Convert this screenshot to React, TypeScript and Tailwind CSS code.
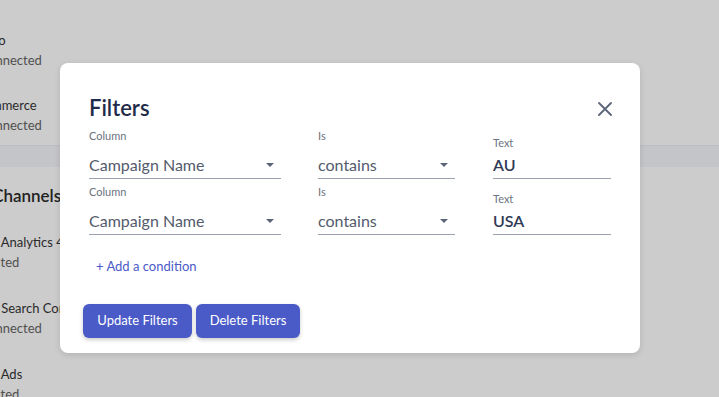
import React from "react";

const items = [
  { name: "Klaviyo", sub: "Not connected", shift: "ml-[7px]" },
  { name: "BigCommerce", sub: "Not connected", shift: "" },
];
const items2 = [
  { name: "Google Analytics 4", sub: "Connected" },
  { name: "Google Search Console", sub: "Not connected" },
  { name: "Google Ads", sub: "Connected" },
];

function Caret() {
  return (
    <svg width="10" height="6" viewBox="0 0 10 6" className="shrink-0">
      <path d="M1 1h8L5 5z" fill="#5b6478" />
    </svg>
  );
}

function SelectField({ label, value, width }: { label: string; value: string; width: string }) {
  return (
    <div className={`flex flex-col ${width}`}>
      <div className="text-[11px] leading-[14px] text-[#6b7280]">{label}</div>
      <div className="mt-[10px] flex items-center justify-between border-b-[1.5px] border-[#9aa0ab] pr-[6px] pb-[1px]">
        <span className="text-[16px] leading-[24px] text-[#535b6c]">{value}</span>
        <Caret />
      </div>
    </div>
  );
}

function TextField({ value }: { value: string }) {
  return (
    <div className="flex w-[118px] flex-col">
      <div className="text-[11px] leading-[14px] text-[#6b7280]">Text</div>
      <div className="mt-[3px] border-b-[1.5px] border-[#9aa0ab] pb-[1px]">
        <span className="text-[16px] font-semibold leading-[24px] text-[#2f3a55]">{value}</span>
      </div>
    </div>
  );
}

function Row({ text }: { text: string }) {
  return (
    <div className="flex items-end">
      <SelectField label="Column" value="Campaign Name" width="w-[192px]" />
      <div className="w-[37px]" />
      <SelectField label="Is" value="contains" width="w-[137px]" />
      <div className="w-[38px]" />
      <TextField value={text} />
    </div>
  );
}

export default function App() {
  return (
    <div className="relative h-[397px] w-[719px] overflow-hidden bg-[#cccccc] font-['Lato',sans-serif]">
      <div className="flex flex-col pt-[30px]">
        <div className="ml-[-43px] flex flex-col gap-[25px]">
          {items.map((it) => (
            <div key={it.name} className="flex flex-col">
              <div className={`text-[13px] leading-5 text-[#2a2a2a] ${it.shift}`}>{it.name}</div>
              <div className="text-[13px] leading-5 text-[#505050]">{it.sub}</div>
            </div>
          ))}
        </div>
        <div className="mt-[10px] h-[22px] border-t border-[#bdbec2] bg-[#c4c5c9]" />
        <div className="ml-[-48px] mt-[17px] text-[17px] font-semibold leading-6 text-[#222]">Data Channels</div>
        <div className="ml-[-43px] mt-[24px] flex flex-col gap-[26px]">
          {items2.map((it) => (
            <div key={it.name} className="flex flex-col">
              <div className="text-[13px] leading-5 text-[#2a2a2a]">{it.name}</div>
              <div className="text-[13px] leading-5 text-[#505050]">{it.sub}</div>
            </div>
          ))}
        </div>
      </div>

      <div className="absolute left-[60px] top-[63px] flex h-[290px] w-[580px] flex-col rounded-lg bg-white pl-[29px] pr-[28px] pt-[31px] shadow-[0_2px_6px_rgba(0,0,0,0.12)]">
        <div className="flex items-center justify-between">
          <h2 className="text-[22px] font-semibold leading-7 text-[#1f2b4a]">Filters</h2>
          <svg width="14" height="14" viewBox="0 0 14 14" className="mt-[2px]">
            <path d="M1 1l12 12M13 1L1 13" stroke="#5b6478" strokeWidth="1.8" strokeLinecap="round" />
          </svg>
        </div>
        <div className="mt-[7px] flex flex-col gap-[6px]">
          <Row text="AU" />
          <Row text="USA" />
        </div>
        <div className="ml-[7px] mt-[21px] text-[13px] leading-5 text-[#4a5bc9]">+ Add a condition</div>
        <div className="-ml-[6px] mt-[28px] flex gap-[4px]">
          <button className="h-[34px] w-[109px] rounded-[6px] bg-[#4a5bc8] text-[13px] text-white shadow-[0_2px_4px_rgba(0,0,0,0.2)]">
            Update Filters
          </button>
          <button className="h-[34px] w-[104px] rounded-[6px] bg-[#4a5bc8] text-[13px] text-white shadow-[0_2px_4px_rgba(0,0,0,0.2)]">
            Delete Filters
          </button>
        </div>
      </div>
    </div>
  );
}
